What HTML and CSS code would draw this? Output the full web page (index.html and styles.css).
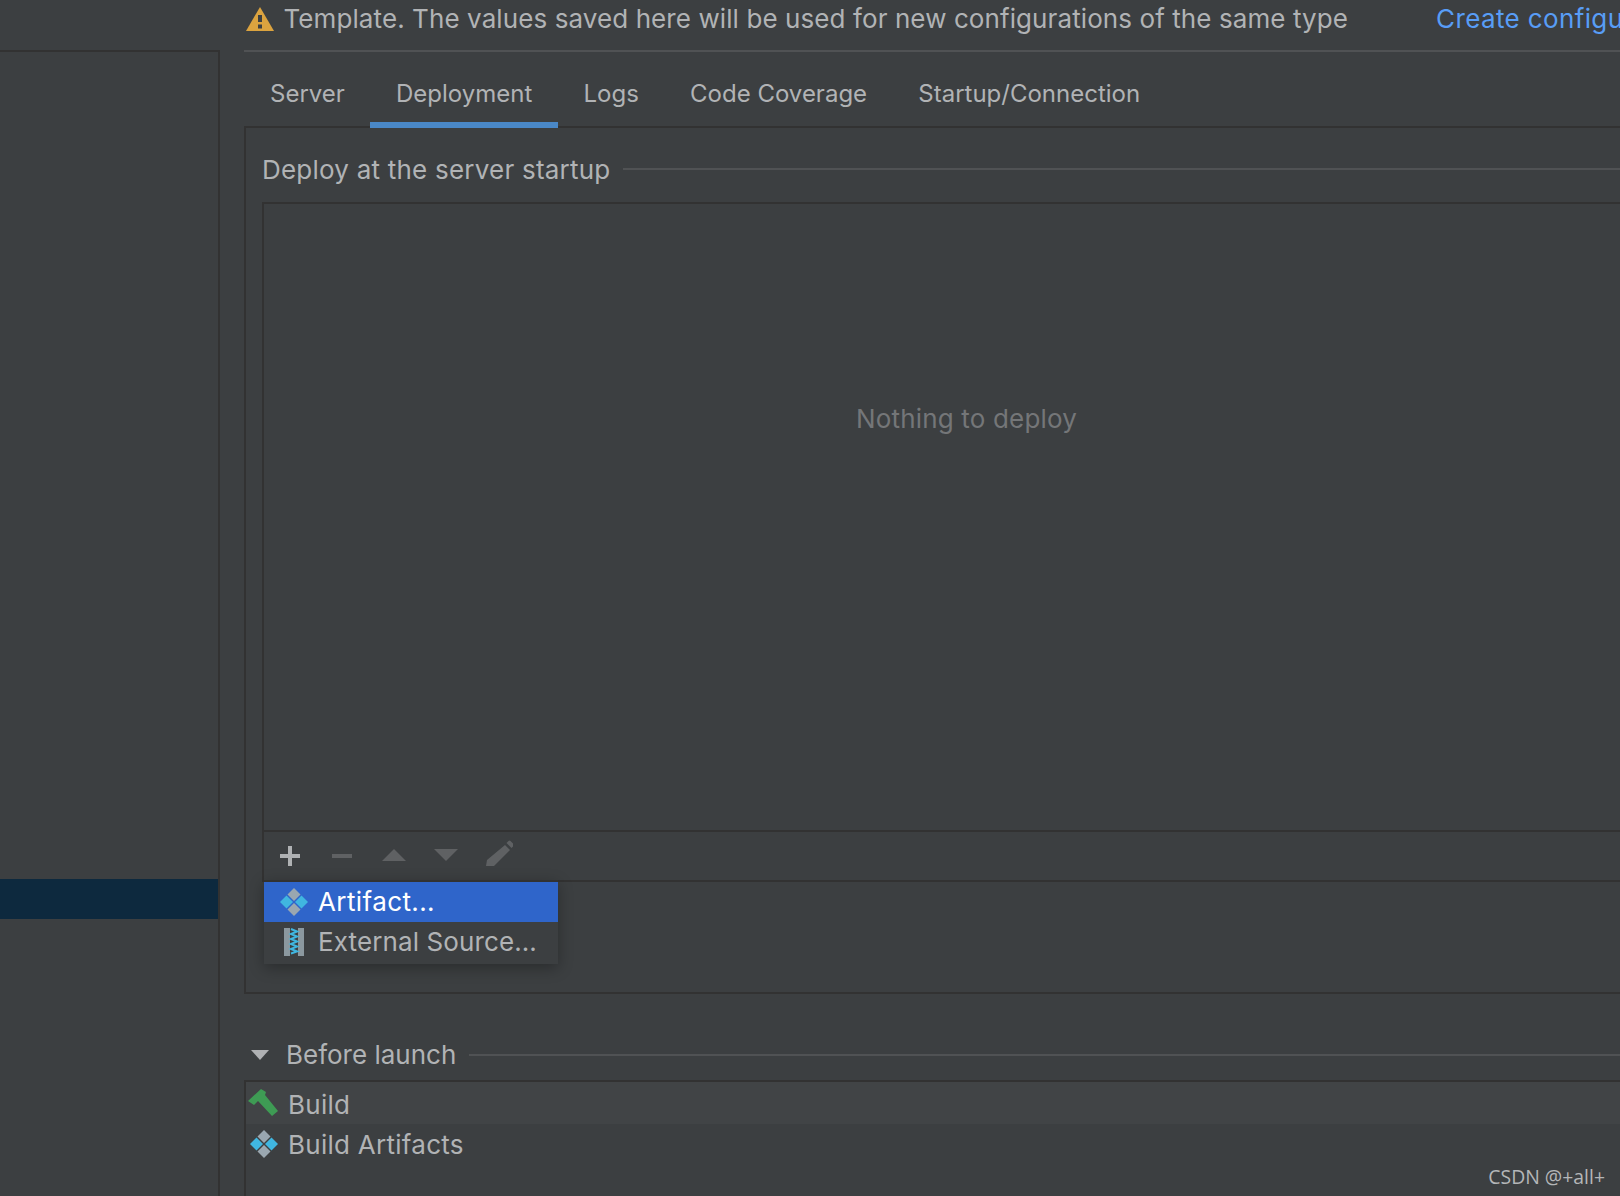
FILE: index.html
```html
<!DOCTYPE html>
<html lang="en">
<head>
<meta charset="utf-8">
<title>Run Configuration Template</title>
<link rel="stylesheet" href="styles.css">
</head>
<body>
<svg class="defs" width="0" height="0" aria-hidden="true">
  <defs>
    <symbol id="artifact" viewBox="0 0 28 28">
      <path fill="#9aa7b0" d="M14 0l6.500 6.500L14 13 7.500 6.500z"/>
      <path fill="#9aa7b0" d="M14 15l6.500 6.500L14 28l-6.500-6.500z"/>
      <path fill="#40b6e0" d="M6.500 7.500L13 14l-6.500 6.500L0 14z"/>
      <path fill="#40b6e0" d="M21.500 7.500L28 14l-6.500 6.500L15 14z"/>
    </symbol>
  </defs>
</svg>
<div class="app">
  <aside class="sidebar">
    <div class="sidebar-selected"></div>
  </aside>
  <main class="main">
    <header class="notice">
      <svg class="warn" viewBox="0 0 28 24" aria-hidden="true">
        <path fill="#dba33f" d="M14 0l14 24H0z"/>
        <rect fill="#3c3f41" x="12" y="8" width="4" height="7"/>
        <rect fill="#3c3f41" x="12" y="17.500" width="4" height="4"/>
      </svg>
      <span class="notice-text">Template. The values saved here will be used for new configurations of the same type</span>
      <a class="notice-link">Create configuration</a>
    </header>
    <nav class="tabs">
      <span class="tab">Server</span>
      <span class="tab tab-active">Deployment</span>
      <span class="tab">Logs</span>
      <span class="tab">Code Coverage</span>
      <span class="tab">Startup/Connection</span>
    </nav>
    <section class="panel">
      <div class="group-title">
        <span class="group-label">Deploy at the server startup</span>
        <i class="rule rule-raised"></i>
      </div>
      <div class="deploy-list">
        <div class="empty">Nothing to deploy</div>
        <div class="toolbar">
          <svg class="tool" viewBox="0 0 22 22" aria-hidden="true"><path fill="#afb1b3" d="M9 1h4v8h8v4h-8v8H9v-8H1V9h8z"/></svg>
          <svg class="tool" viewBox="0 0 22 22" aria-hidden="true"><rect fill="#5f6163" x="1" y="9" width="20" height="4"/></svg>
          <svg class="tool tool-wide" viewBox="0 0 24 22" aria-hidden="true"><path fill="#5f6163" d="M12 4l12 12H0z"/></svg>
          <svg class="tool tool-wide" viewBox="0 0 24 22" aria-hidden="true"><path fill="#5f6163" d="M0 4h24L12 16z"/></svg>
          <svg class="tool tool-pen" viewBox="0 0 28 28" aria-hidden="true"><path fill="#5f6163" d="M20 5l5 5L9 26H1l1-6zM21.500 3l2-2q1-1 2 0l3 3q1 1 0 2l-2 2z"/></svg>
        </div>
        <div class="popup">
          <div class="popup-item popup-item-active">
            <svg class="popup-icon"><use href="#artifact"/></svg>
            <span class="label-artifact">Artifact...</span>
          </div>
          <div class="popup-item">
            <svg class="popup-icon" viewBox="0 0 28 28" aria-hidden="true">
              <rect fill="#8b989f" x="4" y="0" width="20" height="28"/>
              <rect fill="#3c3f41" x="10" y="0" width="8" height="28"/>
              <path fill="none" stroke="#40b6e0" stroke-width="2" d="M11 1l6 2.500-6 2.500 6 2.500-6 2.500 6 2.500-6 2.500 6 2.500-6 2.500 6 2.500-6 2"/>
            </svg>
            <span class="label-source">External Source...</span>
          </div>
        </div>
      </div>
    </section>
    <div class="launch-title">
      <svg class="caret" viewBox="0 0 18 10" aria-hidden="true"><path fill="#afb1b3" d="M0 0h18L9 10z"/></svg>
      <span>Before launch</span>
      <i class="rule"></i>
    </div>
    <div class="launch-list">
      <div class="launch-row launch-row-first">
        <svg class="launch-icon launch-icon-hammer" viewBox="0 0 30 28" aria-hidden="true">
          <path fill="#3e9b54" d="M0 12L13 0l5 3-1 3L30 22l-6 5L10 12l-4 4z"/>
        </svg>
        <span class="launch-label">Build</span>
      </div>
      <div class="launch-row">
        <svg class="launch-icon"><use href="#artifact"/></svg>
        <span class="launch-label launch-label-second">Build Artifacts</span>
      </div>
    </div>
  </main>
</div>
<div class="watermark">CSDN @+all+</div>
</body>
</html>
```

FILE: styles.css
```css
* { box-sizing: border-box; }
html, body {
  margin: 0;
  width: 1620px;
  height: 1196px;
  overflow: hidden;
  background: #3c3f41;
}
body {
  position: relative;
  color: #b1b3b5;
  font-family: Inter, "Liberation Sans", sans-serif;
  font-size: 26px;
  line-height: 32px;
}
.defs { position: absolute; }
.app {
  display: grid;
  grid-template-columns: 220px 1fr;
  column-gap: 24px;
  height: 1196px;
}
.sidebar {
  margin-top: 50px;
  padding-top: 827px;
  border-top: 2px solid #323232;
  border-right: 2px solid #323232;
}
.sidebar-selected { height: 40px; background: #0d293e; }
.main { min-width: 0; overflow: hidden; }

.notice {
  display: flex;
  align-items: center;
  height: 52px;
  padding: 0 0 13px 2px;
  border-bottom: 2px solid #505254;
  white-space: nowrap;
}
.warn { flex: none; width: 28px; height: 24px; margin-right: 9.500px; }
.notice-text { flex: none; letter-spacing: 0.09px; }
.notice-link { flex: none; margin-left: 88px; color: #589df6; letter-spacing: 0.37px; }

.tabs { display: flex; height: 76px; padding-left: 0.400px; position: relative; z-index: 1; }
.tab {
  padding: 26px 25.600px 0;
  font-size: 24px;
  white-space: nowrap;
}
.tab-active { border-bottom: 6px solid #4a88c7; }

.panel {
  margin-right: -51px;
  margin-top: -2px;
  height: 868px;
  padding: 26px 0 0 16px;
  border: 2px solid #323232;
}
.group-title { display: flex; align-items: center; height: 32px; white-space: nowrap; }
.group-label { letter-spacing: 0.22px; }
.rule { flex: 1; height: 2px; margin-left: 13px; background: #505254; }
.rule-raised { margin-top: -2px; }
.deploy-list {
  position: relative;
  height: 680px;
  margin-top: 16px;
  border: 2px solid #323232;
  border-right: 0;
  display: flex;
  flex-direction: column;
}
.empty {
  flex: none;
  height: 628px;
  padding-top: 199px;
  border-bottom: 2px solid #323232;
  text-align: center;
  color: #747678;
  letter-spacing: 0.18px;
}
.toolbar {
  display: flex;
  flex: none;
  align-items: center;
  gap: 30px;
  height: 50px;
  padding-left: 15px;
  border-bottom: 2px solid #323232;
}
.tool { flex: none; width: 22px; height: 22px; }
.tool-wide { width: 24px; margin-left: -1px; margin-right: -1px; }
.tool-pen { width: 28px; height: 28px; margin-top: -4px; margin-left: -2px; }

.popup {
  position: absolute;
  left: 0;
  top: 676px;
  width: 294px;
  height: 84px;
  background: #3c3f41;
  border-top: 2px solid #323232;
  box-shadow: 0 4px 14px rgba(0, 0, 0, 0.3);
  z-index: 2;
}
.popup-item {
  display: flex;
  align-items: center;
  height: 40px;
  padding-left: 16px;
  white-space: nowrap;
}
.popup-item-active { background: #2f65ca; color: #fff; }
.popup-icon { flex: none; width: 28px; height: 28px; margin-right: 10px; }
.label-artifact { letter-spacing: 0.4px; }
.label-source { letter-spacing: 0.11px; }

.launch-title {
  display: flex;
  align-items: center;
  height: 32px;
  margin-top: 45px;
  padding-left: 7px;
  white-space: nowrap;
}
.caret { flex: none; width: 18px; height: 10px; margin-right: 17px; }
.launch-list {
  margin-top: 9px;
  margin-right: -20px;
  height: 200px;
  border-top: 2px solid #323232;
  border-left: 2px solid #323232;
}
.launch-row {
  display: flex;
  align-items: center;
  height: 40px;
  padding-left: 3px;
}
.launch-row-first { height: 42px; background: #414446; }
.launch-icon { flex: none; width: 30px; height: 28px; margin-right: 9px; }
.launch-icon-hammer { margin-left: -1px; margin-right: 10px; }
.launch-label { padding-top: 3px; letter-spacing: 0.27px; }
.launch-label-second { padding-top: 2px; }

.watermark {
  position: absolute;
  right: 15px;
  bottom: 5px;
  font-family: "Open Sans", "DejaVu Sans", sans-serif;
  font-size: 19.400px;
  line-height: 28px;
  color: #b4b6b8;
}
```
